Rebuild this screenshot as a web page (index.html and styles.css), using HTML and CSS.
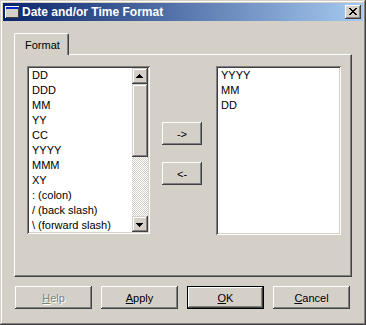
FILE: index.html
```html
<!DOCTYPE html>
<html lang="en">
<head>
  <meta charset="UTF-8">
  <title>Date and/or Time Format</title>
  <link rel="stylesheet" href="styles.css">
</head>
<body>
  <div class="window">
    <!-- Title bar -->
    <div class="titlebar">
      <svg class="app-icon" width="14" height="12" viewBox="0 0 14 12">
        <rect x="0" y="0" width="14" height="12" fill="#ffffff"/>
        <rect x="1" y="1" width="13" height="11" fill="#404040"/>
        <rect x="1" y="1" width="12" height="10" fill="#d4d0c8"/>
        <rect x="1" y="1" width="12" height="2" fill="#0a24cc"/>
      </svg>
      <span class="title">Date and/or Time Format</span>
      <div class="close">
        <svg width="16" height="14" viewBox="0 0 16 14">
          <path d="M4 3h2v1h1v1h2V4h1V3h2v1h-1v1h-1v1H9v1h1v1h1v1h1v1h-2V9H9V8H7v1H6v1H4V9h1V8h1V7h1V6H6V5H5V4H4z" fill="#000"/>
        </svg>
      </div>
    </div>

    <div class="content">
      <div class="tabs">
        <div class="tab active">Format</div>
      </div>

      <div class="panel">
        <!-- Available formats -->
        <div class="listbox source">
          <ul class="items">
            <li>DD</li>
            <li>DDD</li>
            <li>MM</li>
            <li>YY</li>
            <li>CC</li>
            <li>YYYY</li>
            <li>MMM</li>
            <li>XY</li>
            <li>: (colon)</li>
            <li>/ (back slash)</li>
            <li>\ (forward slash)</li>
          </ul>
          <div class="scrollbar">
            <div class="sb-btn">
              <svg width="12" height="12" viewBox="0 0 12 12"><path d="M5 4h1v1h1v1h1v1h1v1H2V7h1V6h1V5h1z" fill="#000"/></svg>
            </div>
            <div class="sb-thumb"></div>
            <div class="sb-track"></div>
            <div class="sb-btn">
              <svg width="12" height="12" viewBox="0 0 12 12"><path d="M2 5h7v1H8v1H7v1H6v1H5V8H4V7H3V6H2z" fill="#000"/></svg>
            </div>
          </div>
        </div>

        <div class="move-buttons">
          <button class="btn small">-&gt;</button>
          <button class="btn small">&lt;-</button>
        </div>

        <!-- Selected formats -->
        <div class="listbox target">
          <ul class="items">
            <li>YYYY</li>
            <li>MM</li>
            <li>DD</li>
          </ul>
        </div>
      </div>

      <div class="actions">
        <button class="btn disabled"><u>H</u>elp</button>
        <button class="btn"><u>A</u>pply</button>
        <button class="btn default"><u>O</u>K</button>
        <button class="btn"><u>C</u>ancel</button>
      </div>
    </div>
  </div>
</body>
</html>
```

FILE: styles.css
```css
body {
  margin: 0;
  background: #d4d0c8;
  font-family: "Liberation Sans", Arial, sans-serif;
  font-size: 11px;
  color: #000;
}

.window {
  width: 366px;
  height: 325px;
  box-sizing: border-box;
  padding: 3px;
  background: #d4d0c8;
  box-shadow: inset -1px -1px #404040, inset 1px 1px #d4d0c8,
              inset -2px -2px #808080, inset 2px 2px #ffffff;
  display: flex;
  flex-direction: column;
}

/* Title bar */
.titlebar {
  height: 18px;
  display: flex;
  align-items: center;
  padding: 0 2px;
  background: linear-gradient(to right, #0a246a, #a6caf0);
}

.app-icon {
  display: block;
  margin-right: 3px;
}

.title {
  flex: 1;
  color: #fff;
  font-weight: bold;
  font-size: 12px;
  white-space: nowrap;
}

.close {
  width: 16px;
  height: 14px;
  background: #d4d0c8;
  box-shadow: inset -1px -1px #404040, inset 1px 1px #ffffff,
              inset -2px -2px #808080, inset 2px 2px #d4d0c8;
}

.close svg {
  display: block;
}

/* Tab control */
.content {
  padding: 12px 11px 0 11px;
}

.tabs {
  display: flex;
  position: relative;
  z-index: 1;
  margin-bottom: -1px;
}

.tab {
  width: 55px;
  height: 22px;
  box-sizing: border-box;
  padding: 5px 0 0 10px;
  background: #d4d0c8;
  border-top: 1px solid #fff;
  border-left: 1px solid #fff;
  border-right: 1px solid #404040;
  box-shadow: inset -1px 0 #808080;
  border-radius: 2px 2px 0 0;
}

.panel {
  height: 223px;
  box-sizing: border-box;
  display: flex;
  align-items: flex-start;
  padding: 11px 0 0 12px;
  border-top: 1px solid #fff;
  border-left: 1px solid #fff;
  border-right: 1px solid #404040;
  border-bottom: 1px solid #404040;
  box-shadow: inset -1px -1px #808080;
}

/* List boxes */
.listbox {
  height: 168px;
  box-sizing: border-box;
  padding: 2px;
  background: #fff;
  display: flex;
  box-shadow: inset 1px 1px #808080, inset -1px -1px #ffffff,
              inset 2px 2px #404040, inset -2px -2px #d4d0c8;
}

.source {
  width: 123px;
}

.target {
  width: 125px;
  height: 169px;
}

.items {
  flex: 1;
  list-style: none;
  margin: 0;
  padding: 0 0 0 3px;
}

.items li {
  height: 15px;
  line-height: 15px;
  white-space: nowrap;
}

.scrollbar {
  width: 16px;
  display: flex;
  flex-direction: column;
}

.sb-btn,
.sb-thumb {
  background: #d4d0c8;
  box-shadow: inset -1px -1px #404040, inset 1px 1px #d4d0c8,
              inset -2px -2px #808080, inset 2px 2px #ffffff;
}

.sb-btn {
  height: 16px;
  display: flex;
  align-items: center;
  justify-content: center;
}

.sb-btn svg {
  display: block;
}

.sb-thumb {
  height: 73px;
}

.sb-track {
  flex: 1;
  background-color: #fff;
  background-image: repeating-conic-gradient(#d4d0c8 0 25%, #ffffff 0 50%);
  background-size: 2px 2px;
}

/* Buttons */
.btn {
  font-family: "Liberation Sans", Arial, sans-serif;
  font-size: 11px;
  color: #000;
  background: #d4d0c8;
  border: none;
  padding: 0;
  width: 77px;
  height: 23px;
  box-shadow: inset -1px -1px #404040, inset 1px 1px #ffffff,
              inset -2px -2px #808080, inset 2px 2px #d4d0c8;
}

.btn.default {
  box-shadow: inset 0 0 0 1px #000, inset -2px -2px #404040, inset 2px 2px #ffffff,
              inset -3px -3px #808080;
}

.btn.disabled {
  color: #808080;
  text-shadow: 1px 1px #fff;
}

.move-buttons {
  display: flex;
  flex-direction: column;
  gap: 17px;
  margin: 56px 14px 0 12px;
}

.btn.small {
  width: 40px;
  height: 23px;
}

.actions {
  display: flex;
  gap: 9px;
  margin-top: 9px;
  padding-left: 1px;
}
```
